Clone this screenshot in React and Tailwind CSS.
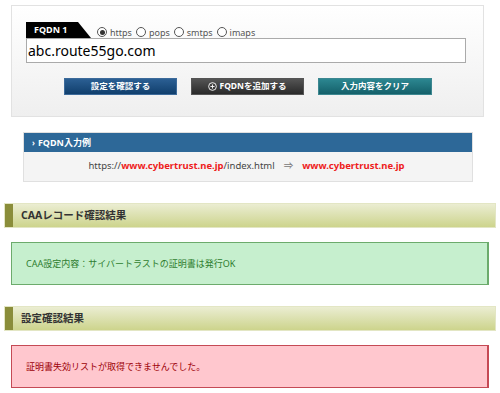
import { useState } from "react";

const font = { fontFamily: '"Noto Sans", "Noto Sans CJK JP", sans-serif' };

function Radio({ checked, label }) {
	return (
		<label className="flex items-center gap-[3px]">
			<span className="w-[10px] h-[10px] rounded-full border border-[#555] bg-white flex items-center justify-center">
				{checked && <span className="w-[5px] h-[5px] rounded-full bg-[#333]" />}
			</span>
			<span>{label}</span>
		</label>
	);
}

function SectionHeader({ title }) {
	return (
		<div className="mx-[4px] h-[25px] flex border border-[#e3e6c4] bg-gradient-to-b from-[#ebedd2] to-[#cdd48c]">
			<div className="w-[8px] bg-[#8a8d3a]" />
			<div className="pl-[8px] flex items-center text-[10.5px] font-bold text-[#333]">
				{title}
			</div>
		</div>
	);
}

export default function App() {
	const [fqdn] = useState("abc.route55go.com");
	const [protocol] = useState("https");

	return (
		<div className="w-[500px] h-[393px] bg-white overflow-hidden" style={font}>
			{/* FQDN form panel */}
			<div className="mx-[11px] mt-[5px] w-[473px] h-[112px] border border-[#e2e2e2] bg-gradient-to-b from-white to-[#efefef] pt-[16px] px-[14px]">
				<div className="flex items-end h-[16px]">
					<div className="relative h-[16px] w-[65px] text-white text-[9px] font-bold leading-[16px] pl-[8px]">
						<div
							className="absolute inset-0 bg-black"
							style={{ clipPath: "polygon(0 0, 80% 0, 100% 100%, 0 100%)" }}
						/>
						<span className="relative">FQDN 1</span>
					</div>
					<div className="flex items-center gap-[4px] ml-[6px] pb-[1px] text-[9px] text-[#555] leading-none">
						{["https", "pops", "smtps", "imaps"].map((p) => (
							<Radio key={p} label={p} checked={p === protocol} />
						))}
					</div>
				</div>
				<div className="w-[440px] h-[25px] border border-[#aaa] bg-white flex items-center pl-[1px] text-[14px] text-black">
					{fqdn}
				</div>
				<div className="flex gap-[14px] mt-[15px] ml-[38px]">
					<button className="w-[113px] h-[17px] border border-[#3c6a9a] bg-gradient-to-b from-[#2b5f93] to-[#103f6d] text-white text-[8.5px] font-bold leading-none">
						設定を確認する
					</button>
					<button className="w-[113px] h-[17px] border border-[#555] bg-gradient-to-b from-[#555] to-[#2a2a2a] text-white text-[8.5px] font-bold leading-none flex items-center justify-center gap-[2px]">
						<svg width="9" height="9" viewBox="0 0 10 10" fill="none" stroke="white" strokeWidth="1">
							<circle cx="5" cy="5" r="4.3" />
							<path d="M5 2.7v4.6M2.7 5h4.6" />
						</svg>
						FQDNを追加する
					</button>
					<button className="w-[114px] h-[17px] border border-[#3c8790] bg-gradient-to-b from-[#2c8791] to-[#14606a] text-white text-[8.5px] font-bold leading-none">
						入力内容をクリア
					</button>
				</div>
			</div>

			{/* FQDN example */}
			<div className="mx-[23px] mt-[15px] w-[450px] border border-[#e0e0e0]">
				<div className="h-[19px] bg-[#2d6898] flex items-center pl-[8px] text-white text-[9px] font-bold">
					<span className="mr-[3px] text-[8px]">›</span>FQDN入力例
				</div>
				<div className="h-[29px] bg-[#f4f4f4] flex items-center justify-center text-[9.5px] text-[#444] pr-[3px]">
					<span>https://</span>
					<span className="text-[#ee1c1c] font-bold">www.cybertrust.ne.jp</span>
					<span>/index.html</span>
					<span className="mx-[9px] text-[#777]">⇒</span>
					<span className="text-[#ee1c1c] font-bold">www.cybertrust.ne.jp</span>
				</div>
			</div>

			{/* CAA result */}
			<div className="mt-[21px]">
				<SectionHeader title="CAAレコード確認結果" />
			</div>
			<div className="mx-[11px] mt-[14px] h-[43px] border border-[#6cab6c] border-r-2 bg-[#c6efce] flex items-center pl-[14px] text-[9px] text-[#2e7d2e]">
				CAA設定内容：サイバートラストの証明書は発行OK
			</div>

			{/* Settings result */}
			<div className="mt-[21px]">
				<SectionHeader title="設定確認結果" />
			</div>
			<div className="mx-[11px] mt-[14px] h-[43px] border border-[#c54a55] border-r-2 bg-[#ffc7ce] flex items-center pl-[14px] text-[9px] text-[#9c0006]">
				証明書失効リストが取得できませんでした。
			</div>
		</div>
	);
}
